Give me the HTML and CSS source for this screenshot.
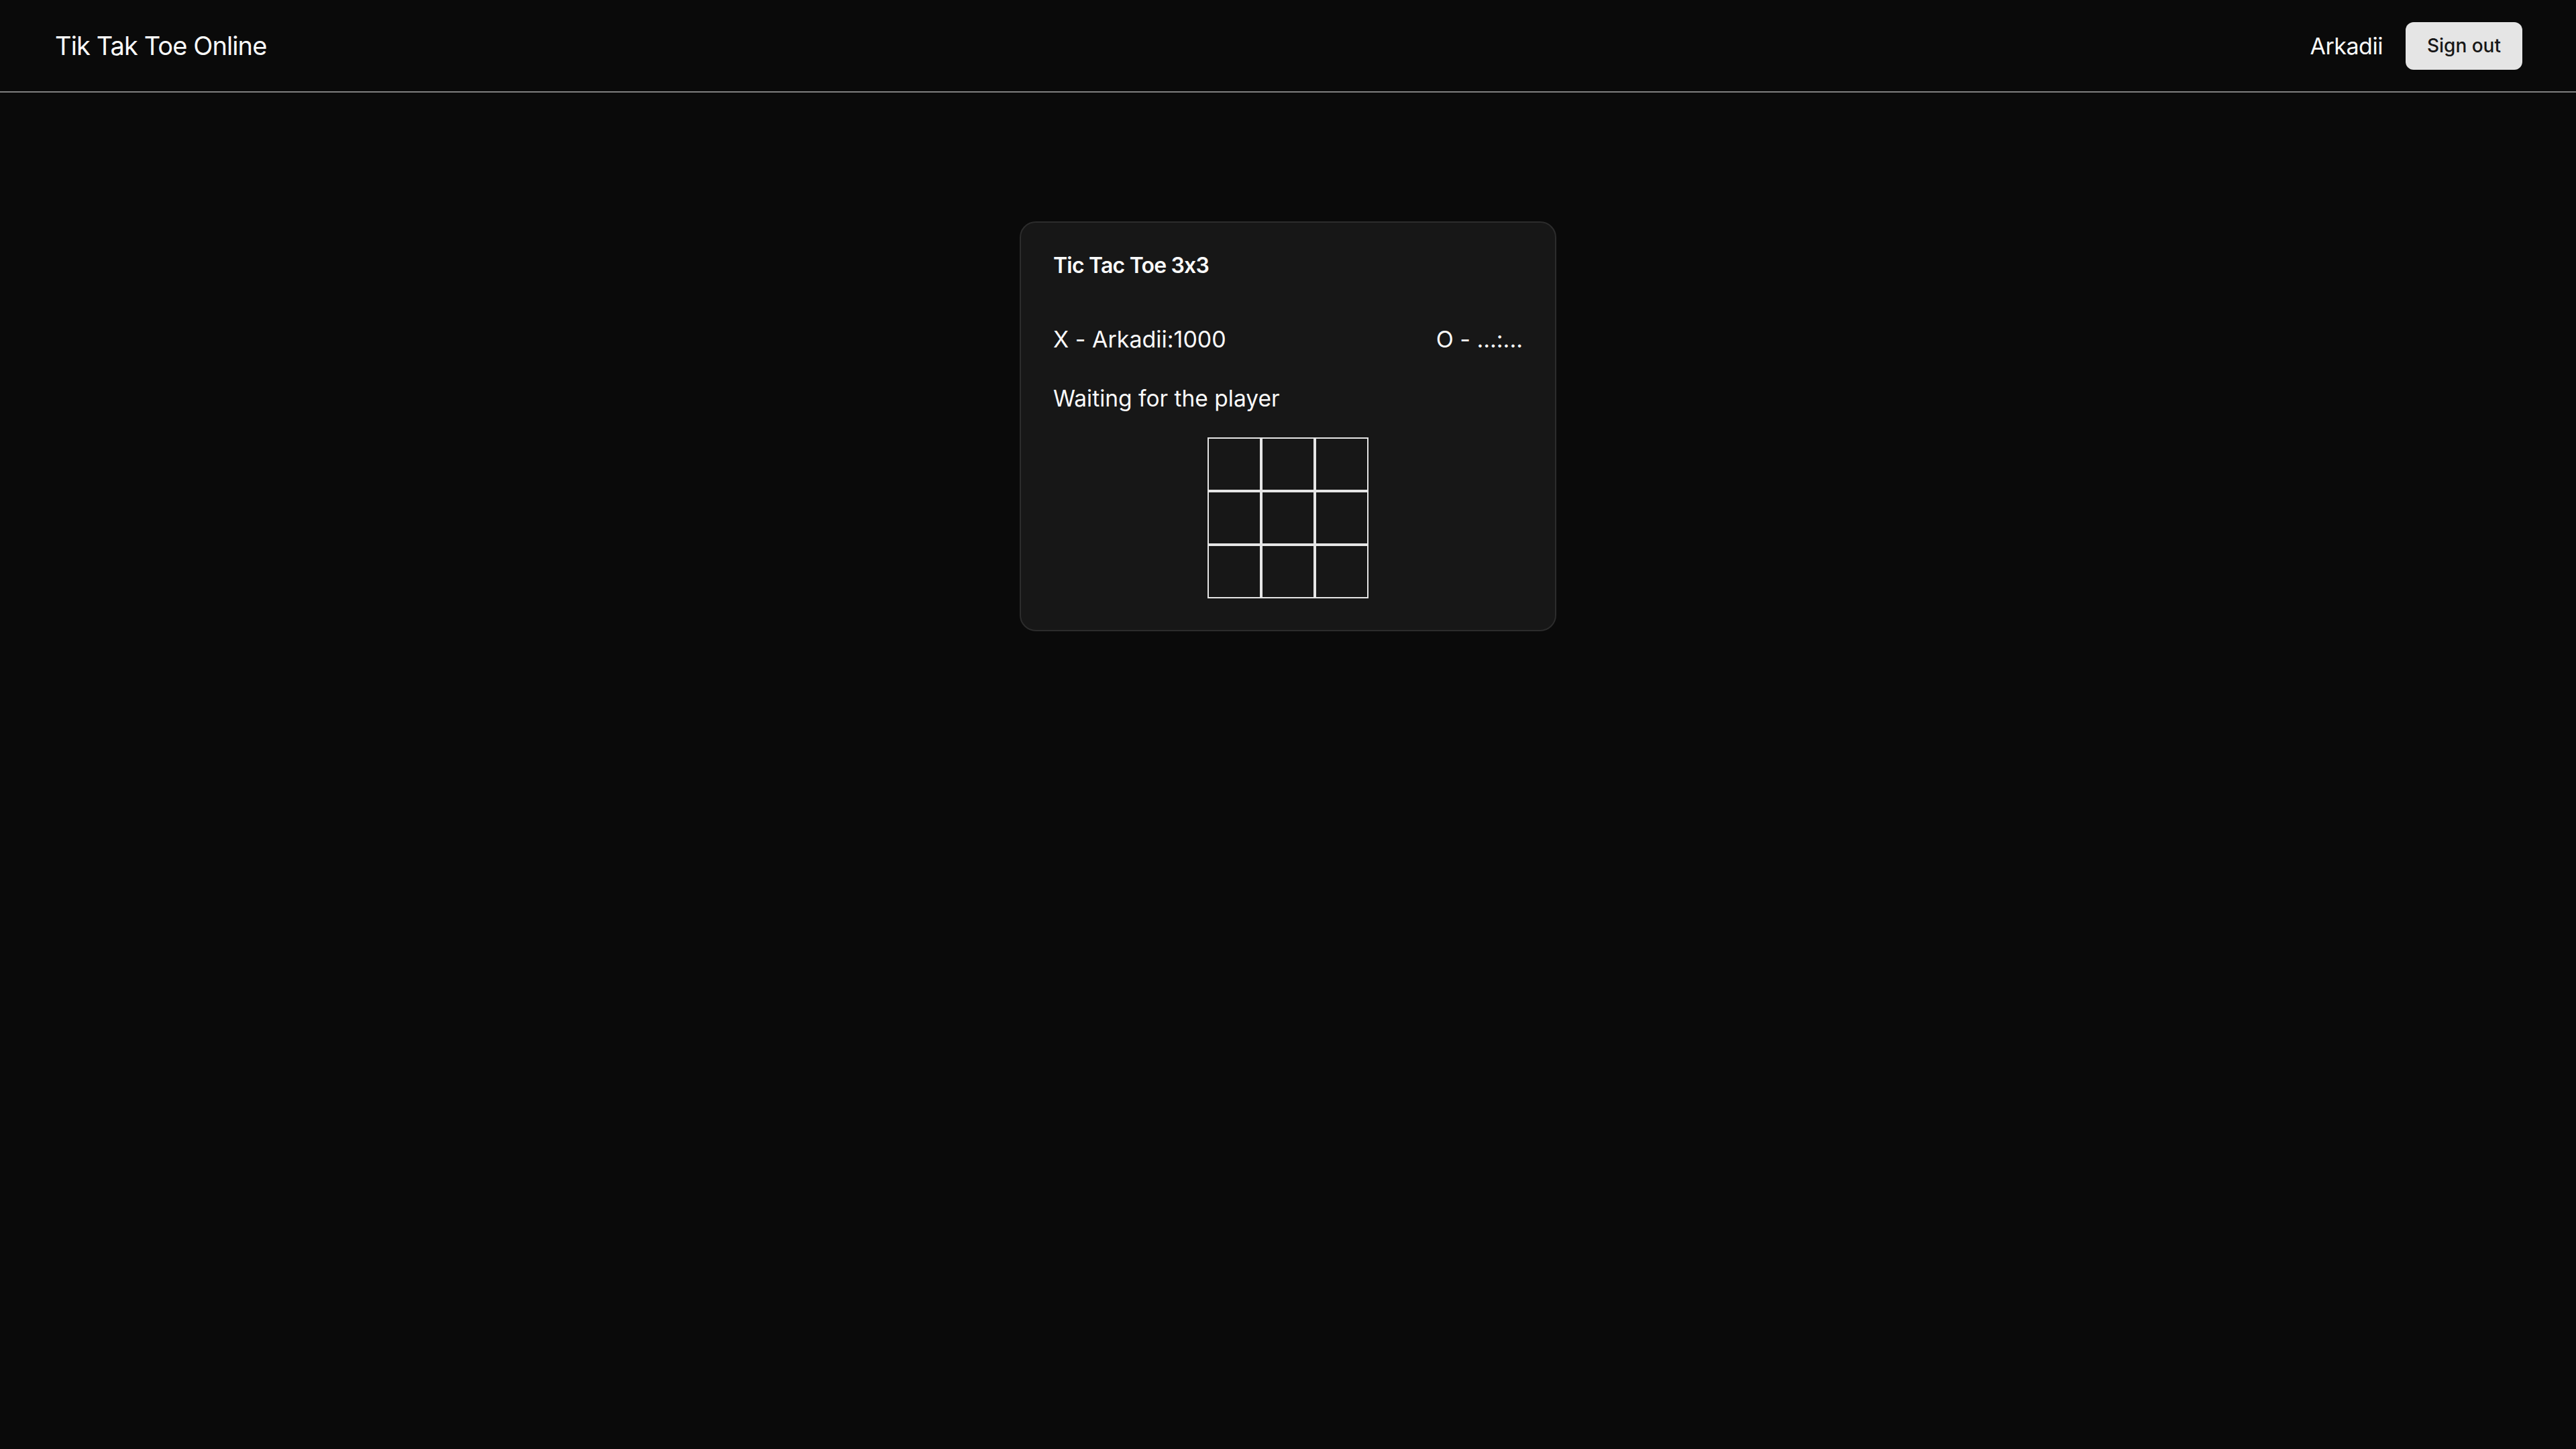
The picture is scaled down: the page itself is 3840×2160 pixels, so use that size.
FILE: index.html
```html
<!DOCTYPE html>
<html lang="en">
<head>
<meta charset="utf-8">
<title>Tik Tak Toe Online</title>
<link rel="stylesheet" href="styles.css">
</head>
<body>
<header class="header">
  <div class="brand">Tik Tak Toe Online</div>
  <div class="user">
    <span class="user-name">Arkadii</span>
    <button class="btn-signout">Sign out</button>
  </div>
</header>
<main class="main">
  <section class="card">
    <h2 class="card-title">Tic Tac Toe 3x3</h2>
    <div class="players">
      <span>X - Arkadii:1000</span>
      <span>O - ...:...</span>
    </div>
    <div class="status">Waiting for the player</div>
    <div class="board">
      <div class="cell"></div><div class="cell"></div><div class="cell"></div>
      <div class="cell"></div><div class="cell"></div><div class="cell"></div>
      <div class="cell"></div><div class="cell"></div><div class="cell"></div>
    </div>
  </section>
</main>
</body>
</html>
```

FILE: styles.css
```css
* { box-sizing: border-box; }
html, body { margin: 0; padding: 0; }
body {
  background: #0a0a0a;
  color: #fafafa;
  font-family: Inter, "Noto Sans", "Liberation Sans", sans-serif;
  font-feature-settings: "calt" 0;
  min-height: 100vh;
}
.header {
  height: 138px;
  border-bottom: 2px solid #808080;
  display: flex;
  align-items: center;
  justify-content: space-between;
  padding: 0 80px 0 82px;
}
.brand {
  font-size: 38px;
  font-weight: 400;
  letter-spacing: -0.9px;
}
.user {
  display: flex;
  align-items: center;
  gap: 34px;
}
.user-name {
  font-size: 34px;
  font-weight: 400;
  letter-spacing: -0.5px;
}
.btn-signout {
  height: 71px;
  padding: 0 32px;
  border: none;
  border-radius: 12px;
  background: #e5e5e5;
  color: #171717;
  font-family: inherit;
  font-feature-settings: "calt" 0;
  font-size: 28px;
  font-weight: 500;
}
.main {
  display: flex;
  justify-content: center;
  padding-top: 192px;
}
.card {
  width: 800px;
  background: #171717;
  border: 2px solid #2c2c2c;
  border-radius: 24px;
  padding: 48px 48px 47px;
  display: flex;
  flex-direction: column;
}
.card-title {
  margin: 0;
  font-size: 32px;
  font-weight: 600;
  line-height: 32px;
  letter-spacing: -0.8px;
}
.players {
  margin-top: 70px;
  display: flex;
  justify-content: space-between;
  font-size: 34px;
  line-height: 48px;
}
.status {
  margin-top: 40px;
  font-size: 33.5px;
  line-height: 48px;
}
.board {
  margin: 34px auto 0;
  display: grid;
  grid-template-columns: repeat(3, 80px);
  grid-template-rows: repeat(3, 80px);
}
.cell {
  border: 2px solid #e5e5e5;
}
```
